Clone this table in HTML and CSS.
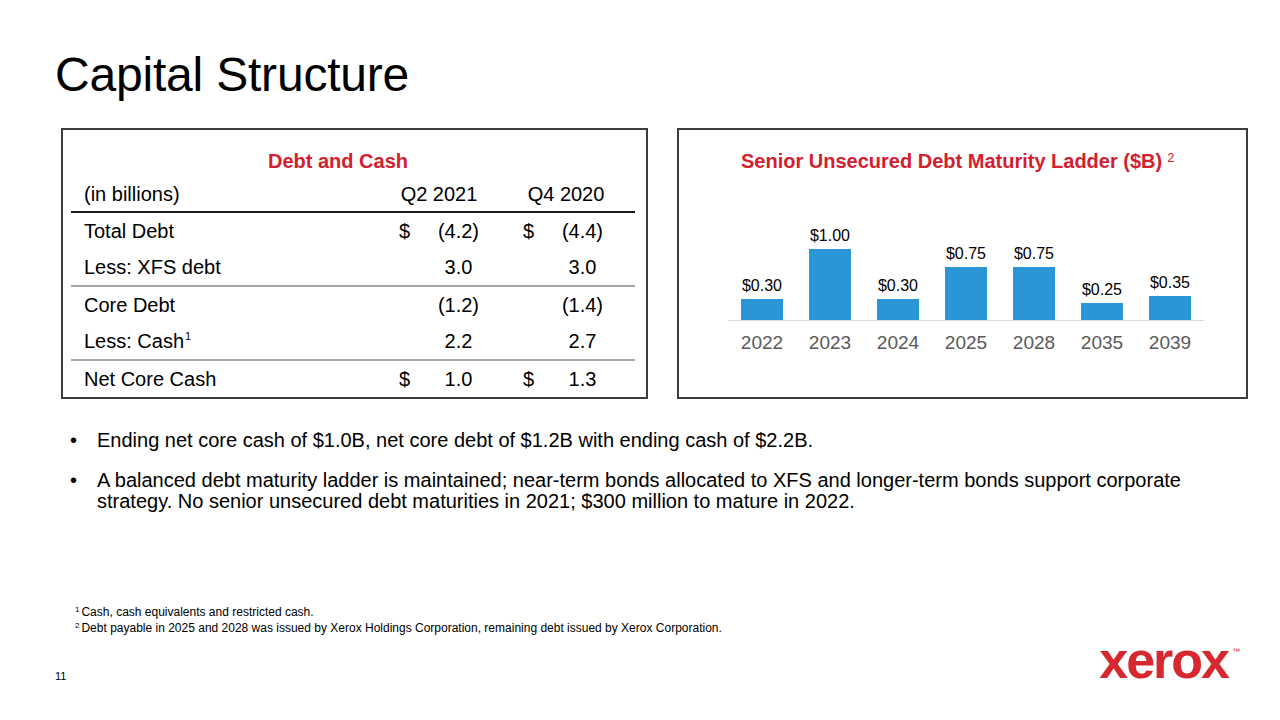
FILE: index.html
```html
<!DOCTYPE html>
<html lang="en">
<head>
<meta charset="utf-8">
<title>Capital Structure</title>
<link rel="stylesheet" href="styles.css">
</head>
<body>
<div class="slide">
  <h1 class="title">Capital Structure</h1>

  <div class="panels">
    <section class="panel panel-table">
      <div class="panel-title table-title">Debt and Cash</div>
      <div class="fin">
        <div class="row head">
          <div class="lbl">(in billions)</div>
          <div class="col hd">Q2 2021</div>
          <div class="sp"></div>
          <div class="col hd hd-q4">Q4 2020</div>
          <div class="sp"></div>
        </div>
        <div class="row">
          <div class="lbl">Total Debt</div>
          <div class="col"><span class="cur">$</span><span class="val">(4.2)</span></div>
          <div class="sp"></div>
          <div class="col"><span class="cur">$</span><span class="val">(4.4)</span></div>
          <div class="sp"></div>
        </div>
        <div class="row sep">
          <div class="lbl">Less: XFS debt</div>
          <div class="col"><span class="val">3.0<span class="ph">)</span></span></div>
          <div class="sp"></div>
          <div class="col"><span class="val">3.0<span class="ph">)</span></span></div>
          <div class="sp"></div>
        </div>
        <div class="row">
          <div class="lbl">Core Debt</div>
          <div class="col"><span class="val">(1.2)</span></div>
          <div class="sp"></div>
          <div class="col"><span class="val">(1.4)</span></div>
          <div class="sp"></div>
        </div>
        <div class="row sep">
          <div class="lbl">Less: Cash<sup class="fn">1</sup></div>
          <div class="col"><span class="val">2.2<span class="ph">)</span></span></div>
          <div class="sp"></div>
          <div class="col"><span class="val">2.7<span class="ph">)</span></span></div>
          <div class="sp"></div>
        </div>
        <div class="row last">
          <div class="lbl">Net Core Cash</div>
          <div class="col"><span class="cur">$</span><span class="val">1.0<span class="ph">)</span></span></div>
          <div class="sp"></div>
          <div class="col"><span class="cur">$</span><span class="val">1.3<span class="ph">)</span></span></div>
          <div class="sp"></div>
        </div>
      </div>
    </section>

    <section class="panel panel-chart">
      <div class="panel-title chart-title">Senior Unsecured Debt Maturity Ladder ($B)<sup class="chart-sup">2</sup></div>
      <div class="plot">
        <div class="bar-col"><span class="bar-val">$0.30</span><div class="bar" style="height:21px"></div></div>
        <div class="bar-col"><span class="bar-val">$1.00</span><div class="bar" style="height:71px"></div></div>
        <div class="bar-col"><span class="bar-val">$0.30</span><div class="bar" style="height:21px"></div></div>
        <div class="bar-col"><span class="bar-val">$0.75</span><div class="bar" style="height:53px"></div></div>
        <div class="bar-col"><span class="bar-val">$0.75</span><div class="bar" style="height:53px"></div></div>
        <div class="bar-col"><span class="bar-val">$0.25</span><div class="bar" style="height:17px"></div></div>
        <div class="bar-col"><span class="bar-val">$0.35</span><div class="bar" style="height:24px"></div></div>
      </div>
      <div class="years">
        <span>2022</span><span>2023</span><span>2024</span><span>2025</span><span>2028</span><span>2035</span><span>2039</span>
      </div>
    </section>
  </div>

  <ul class="bullets">
    <li>Ending net core cash of $1.0B, net core debt of $1.2B with ending cash of $2.2B.</li>
    <li>A balanced debt maturity ladder is maintained; near-term bonds allocated to XFS and longer-term bonds support corporate strategy. No senior unsecured debt maturities in 2021; $300 million to mature in 2022.</li>
  </ul>

  <div class="notes">
    <p><sup>1</sup>Cash, cash equivalents and restricted cash.</p>
    <p><sup>2</sup>Debt payable in 2025 and 2028 was issued by Xerox Holdings Corporation, remaining debt issued by Xerox Corporation.</p>
  </div>

  <footer class="footer">
    <span class="page-num">11</span>
    <span class="logo">xerox<span class="tm">™</span></span>
  </footer>
</div>
</body>
</html>
```

FILE: styles.css
```css
* { box-sizing: border-box; }
html, body { margin: 0; padding: 0; background: #fff; }
body {
  font-family: "Liberation Sans", Arial, Helvetica, sans-serif;
  color: #000;
}
.slide {
  width: 1280px;
  height: 720px;
  overflow: hidden;
  background: #fff;
}
.title {
  margin: 0;
  padding: 47px 0 0 55px;
  font-size: 48px;
  font-weight: normal;
  line-height: 56px;
  letter-spacing: -0.2px;
}
.panels {
  display: flex;
  gap: 29px;
  margin-top: 25px;
  padding-left: 61px;
}
.panel {
  border: 2px solid #3d3d3d;
  height: 271px;
  padding-top: 15px;
}
.panel-table { width: 587px; }
.panel-chart { width: 571px; }
.panel-title {
  color: #d3202f;
  font-weight: bold;
  font-size: 20px;
  line-height: 32px;
}
.table-title { padding-left: 205px; }
.chart-title { padding-left: 62px; }
.chart-sup {
  font-weight: normal;
  font-size: 13px;
  vertical-align: 6px;
  line-height: 0;
  margin-left: 5px;
}

/* financial table */
.fin {
  margin: 0 11px 0 8px;
  font-size: 20px;
}
.row {
  display: grid;
  grid-template-columns: 328px 80px 44px 80px 1fr;
  height: 36px;
  line-height: 36px;
}
.row.head {
  height: 36px;
  line-height: 34px;
  border-bottom: 2px solid #1a1a1a;
}
.row.sep {
  height: 38px;
  border-bottom: 2px solid #a6a6a6;
}
.row.last { height: 35px; }
.lbl { padding-left: 13px; white-space: nowrap; }
.col {
  display: flex;
  justify-content: space-between;
}
.col .val { margin-left: auto; }
.col.hd { justify-content: center; white-space: nowrap; }
.col.hd-q4 { padding-left: 6px; }
.ph { visibility: hidden; }
.fn {
  font-size: 11px;
  line-height: 0;
  vertical-align: 8px;
  margin-left: 1px;
}

/* chart */
.plot {
  display: flex;
  align-items: flex-end;
  margin-left: 49px;
  width: 476px;
  height: 144px;
  border-bottom: 1px solid #d9d9d9;
}
.bar-col {
  flex: 1;
  display: flex;
  flex-direction: column;
  align-items: center;
}
.bar-val {
  font-size: 16px;
  line-height: 18px;
  margin-bottom: 4px;
}
.bar {
  width: 42px;
  background: #2b96d6;
}
.years {
  display: flex;
  margin-left: 49px;
  width: 476px;
  margin-top: 10px;
  line-height: 24px;
  font-size: 19px;
  color: #595959;
}
.years span { flex: 1; text-align: center; }

/* bullets */
.bullets {
  list-style: none;
  margin: 31px 0 0 0;
  padding: 0 0 0 70px;
  font-size: 20px;
  line-height: 21px;
}
.bullets li {
  position: relative;
  padding-left: 27px;
  width: 1130px;
}
.bullets li + li { margin-top: 19px; }
.bullets li::before {
  content: "•";
  position: absolute;
  left: 0;
  top: 0;
}

/* footnotes */
.notes {
  margin-top: 92px;
  padding-left: 75px;
  font-size: 12px;
  line-height: 16px;
}
.notes p { margin: 0; }
.notes sup {
  font-size: 8px;
  line-height: 0;
  vertical-align: 4px;
  margin-right: 2px;
}

/* footer */
.footer {
  display: flex;
  justify-content: space-between;
  height: 44px;
  margin-top: 4px;
  padding: 0 40px 0 55px;
}
.page-num {
  align-self: flex-end;
  font-size: 11px;
  line-height: 16px;
}
.logo {
  align-self: flex-start;
  color: #d7282f;
  font-weight: bold;
  font-size: 52px;
  line-height: 40px;
  letter-spacing: -2px;
  position: relative;
  padding-right: 12px;
}
.tm {
  position: absolute;
  right: 0;
  top: 8px;
  font-size: 8px;
  line-height: 8px;
  font-weight: normal;
  letter-spacing: 0;
}
```
